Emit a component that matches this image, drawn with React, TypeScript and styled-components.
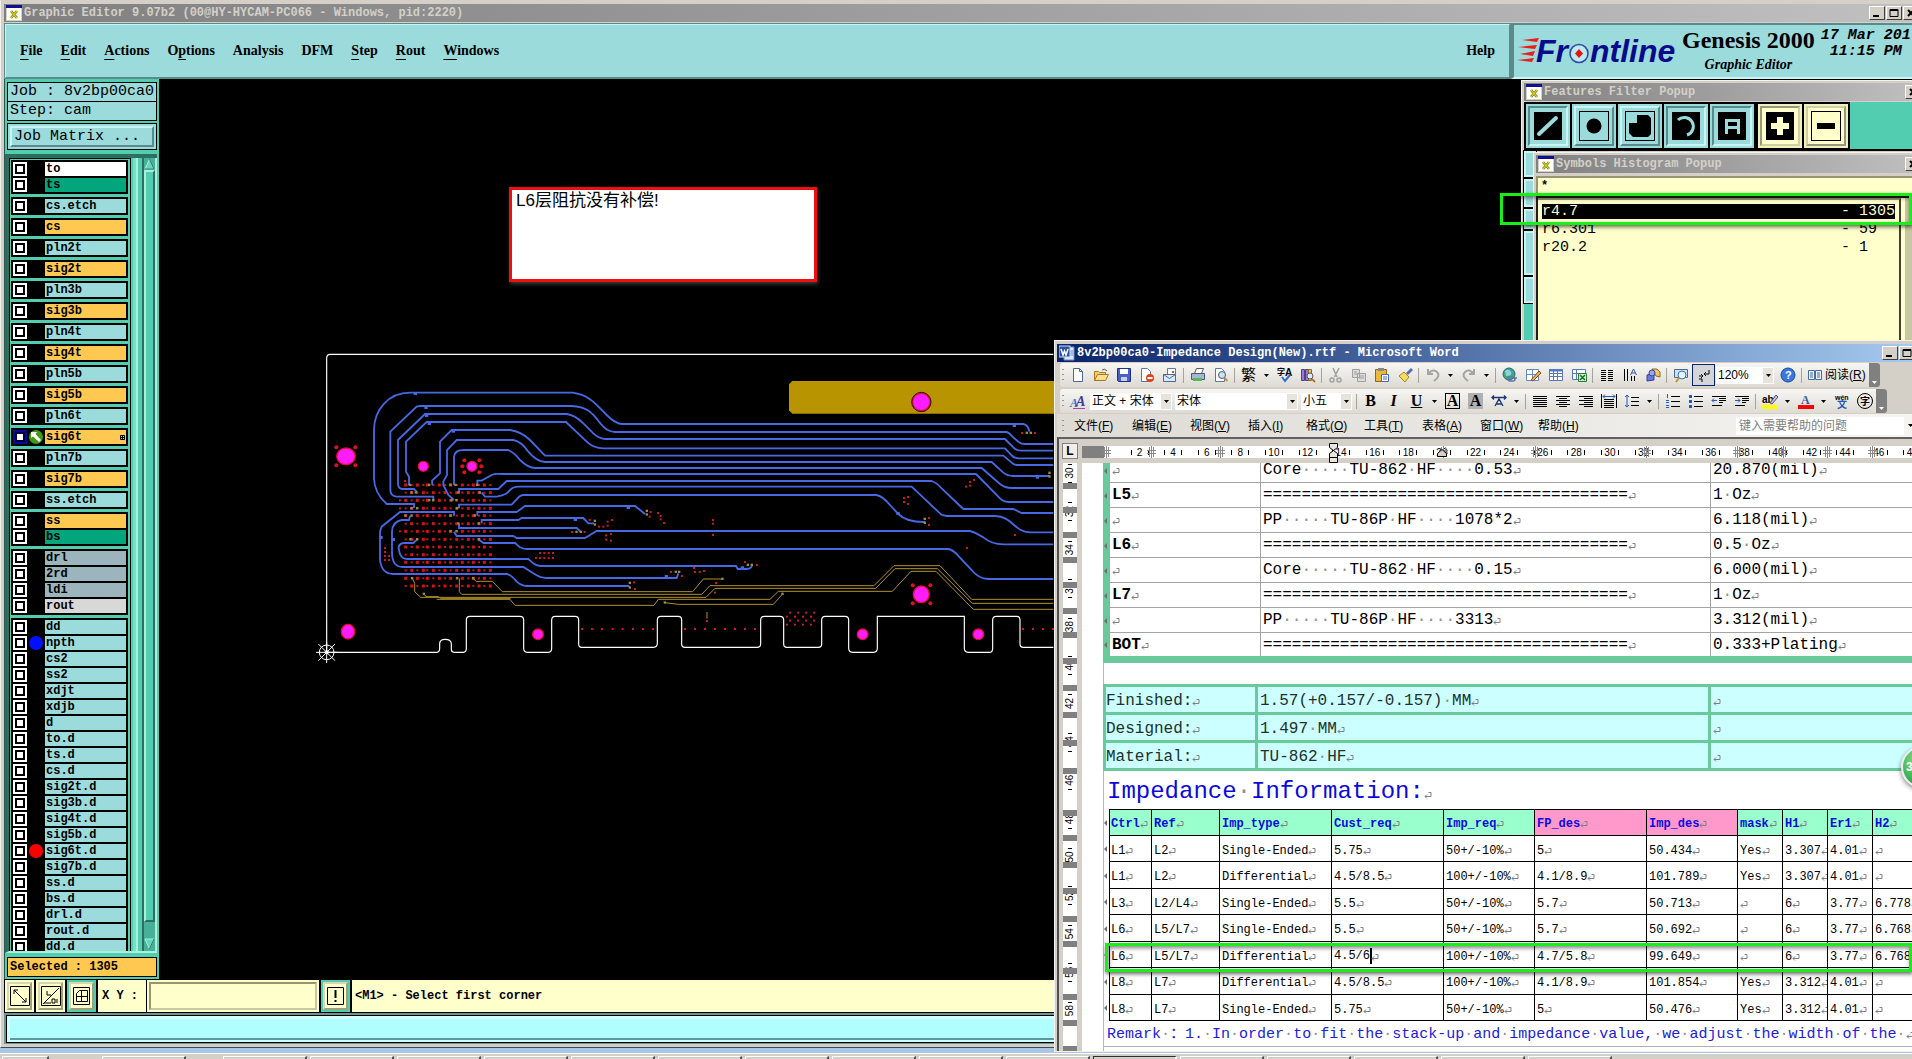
import React from "react";
import styled, { createGlobalStyle, css } from "styled-components";

const MONO = `"Liberation Mono", "Noto Sans CJK SC", monospace`;
const SERIF = `"Liberation Serif", "Noto Sans CJK SC", serif`;
const SANS = `"Liberation Sans", "Noto Sans CJK SC", sans-serif`;

const C = {
  face: "#d4d0c8",
  aqua: "#9cdbdb",
  aquaLight: "#c8f4f4",
  aquaDark: "#5a8a8a",
  teal: "#52cdb0",
  tealLight: "#a8f0dc",
  tealDark: "#2e6e60",
  cream: "#ffffcc",
  orange: "#ffc850",
  green: "#6ac99a",
};

const Global = createGlobalStyle`
  *, *::before, *::after { box-sizing: border-box; }
  html, body { margin: 0; background: #000; overflow: hidden; }
  button, input, select { font: inherit; color: inherit; margin: 0; padding: 0; border: 0; border-radius: 0; }
  button { background: none; white-space: nowrap; }
  svg { display: block; flex: none; }
`;

const raised = (w: number, light: string, dark: string) => css`
  border-style: solid;
  border-width: ${w}px;
  border-color: ${light} ${dark} ${dark} ${light};
`;

/* ---------- shell ---------- */

const Desktop = styled.div`
  position: relative;
  display: flex;
  flex-direction: column;
  height: 100vh;
  overflow: hidden;
  background: #a9c6e6;
  font-family: ${MONO};
  font-size: 12px;
  line-height: 14px;
  color: #000;
`;

const MainWindow = styled.div`
  display: flex;
  flex-direction: column;
  flex: 1;
  min-height: 0;
  margin: 0 -14px 5px 0;
  padding: 3px 4px 0 3px;
  border: 1px solid #f4f2ee;
  border-bottom: 1px solid #404a55;
  border-top-color: ${C.face};
  background: ${C.face};
`;

const TitleBar = styled.div<{ $active?: boolean }>`
  display: flex;
  align-items: center;
  gap: 2px;
  height: 18px;
  flex: none;
  padding: 0 2px;
  color: ${p => (p.$active ? "#fff" : C.face)};
  font-weight: bold;
  white-space: nowrap;
  background: ${p =>
    p.$active
      ? "linear-gradient(90deg, #0a246a, #a6caf0)"
      : "linear-gradient(90deg, #808080, #c0c0c0)"};
`;

const Title = styled.span`
  flex: 1;
`;

const WinButton = styled.button`
  display: grid;
  place-items: center;
  width: 16px;
  height: 14px;
  background: ${C.face};
  ${raised(1, "#fff", "#404040")}
`;

const Buttons = styled.div`
  display: flex;
  gap: 1px;
`;

const AppIcon = () => (
  <svg width="16" height="16" viewBox="0 0 16 16">
    <rect x="0.5" y="0.5" width="15" height="15" fill="#fff" stroke="#d4d0c8" />
    <rect x="0" y="0" width="16" height="3" fill="#10108a" />
    <path d="M5 6L11 13M11 6L5 13" stroke="#8a8a10" strokeWidth="2.6" />
    <path d="M5 6L11 13M11 6L5 13" stroke="#e8e020" strokeWidth="1" />
  </svg>
);

type WinKind = "min" | "max" | "close";
const winPath: Record<WinKind, string> = {
  min: "M1 8h6",
  max: "M1 1.5h8v7h-8zM1 2.5h8",
  close: "M2 2l6 6M8 2l-6 6",
};
const WindowButton = ({ kind }: { kind: WinKind }) => (
  <WinButton aria-label={kind}>
    <svg width="10" height="10" viewBox="0 0 10 10">
      <path d={winPath[kind]} fill="none" stroke="#000" strokeWidth={kind === "max" ? 1 : 2} />
    </svg>
  </WinButton>
);

/* ---------- menu strip ---------- */

const TopStrip = styled.header`
  display: flex;
  flex: none;
  height: 56px;
  margin-top: 1px;
  background: ${C.aqua};
`;

const MenuBar = styled.nav`
  display: flex;
  align-items: center;
  flex: 1;
  gap: 18px;
  padding: 0 14px;
  font: bold 14px/18px ${SERIF};
  ${raised(2, C.aquaLight, C.aquaDark)}
  outline: 1px solid ${C.aquaDark};
  outline-offset: -1px;
`;

const MenuItem = styled.button`
  text-underline-offset: 4px;
  &:last-child { margin-left: auto; }
`;

const Brand = styled.div`
  display: flex;
  flex: none;
  width: 410px;
  gap: 4px;
  padding-left: 2px;
  border-left: 3px solid ${C.aquaDark};
  border-top: 2px solid ${C.aquaDark};
  border-bottom: 2px solid ${C.aquaLight};
  white-space: nowrap;
`;

const BrandLogo = styled.div`
  padding-top: 7px;
`;

const BrandTitle = styled.div`
  text-align: center;
  font: bold 24px/30px ${SERIF};
`;

const BrandSub = styled.div`
  font: italic bold 14px/20px ${SERIF};
`;

const BrandDate = styled.div`
  padding: 3px 0 0 2px;
  text-align: center;
  font: italic bold 15px/16px ${MONO};
`;

const FrontlineLogo = () => (
  <svg width="162" height="40" viewBox="0 -4 162 40">
    <g fill="#ee1c1c">
      <path d="M6 4L23 2L21 6Z" />
      <path d="M2 11L21 9L19 13Z" />
      <path d="M4 18L19 15L17 20Z" />
      <path d="M1 24L18 22L16 26Z" />
    </g>
    <g fill="#0a0a8c" fontFamily="Liberation Sans, sans-serif" fontWeight="bold" fontStyle="italic" fontSize="32">
      <text x="20" y="26">Fr</text>
      <text x="74" y="26">ntline</text>
    </g>
    <circle cx="63" cy="17.500" r="9" fill="#b8ecf0" stroke="#3848a8" strokeWidth="1.600" />
    <path d="M63 13l4 4.500-4 4.500-4-4.500z" fill="#ee1010" />
  </svg>
);

const menus: [string, number][] = [
  ["File", 0], ["Edit", 0], ["Actions", 0], ["Options", 1], ["Analysis", -1],
  ["DFM", -1], ["Step", 0], ["Rout", 0], ["Windows", 0], ["Help", -1],
];

/* ---------- layer sidebar ---------- */

const Body = styled.main`
  display: flex;
  flex: 1;
  min-height: 0;
  background: #000;
`;

const Sidebar = styled.aside`
  display: flex;
  flex-direction: column;
  flex: none;
  width: 155px;
  padding: 3px 2px 3px;
  background: ${C.teal};
  border-left: 1px solid #24584c;
`;

const InfoBox = styled.div<{ $small?: boolean }>`
  height: 20px;
  flex: none;
  margin-bottom: -1px;
  padding: 0 2px;
  border: 1px solid #000;
  background: ${p => (p.$small ? C.orange : C.aqua)};
  font-size: ${p => (p.$small ? 12 : 15)}px;
  font-weight: ${p => (p.$small ? "bold" : "normal")};
  line-height: 18px;
  white-space: nowrap;
`;

const MatrixFrame = styled.div`
  flex: none;
  margin: 3px 0 4px;
  padding: 2px;
  border: 1px solid #000;
  background: ${C.aqua};
`;

const MatrixButton = styled.button`
  display: block;
  width: 100%;
  height: 21px;
  padding-left: 2px;
  text-align: left;
  font-size: 15px;
  line-height: 16px;
  ${raised(2, C.aquaLight, C.aquaDark)}
`;

const ListFrame = styled.div`
  display: flex;
  flex: 1;
  min-height: 0;
  margin: 0 0 4px -2px;
  border-top: 4px solid ${C.tealDark};
  border-left: 4px solid ${C.tealDark};
  border-bottom: 2px solid ${C.tealLight};
`;

const LayerList = styled.div`
  display: flex;
  flex-direction: column;
  gap: 3px;
  width: 122px;
  padding: 1px 2px 0 1px;
  overflow: hidden;
  border: 1px solid #000;
  border-bottom: 0;
`;

const ListEdge = styled.div`
  width: 11px;
  border-left: 2px solid ${C.teal};
  border-right: 4px solid ${C.teal};
  background: linear-gradient(90deg, #78e0c8 3px, ${C.tealLight} 3px);
`;

const LayerGroup = styled.div`
  display: grid;
  flex: none;
  gap: 2px;
  padding: 2px;
  background: #000;
`;

const Layer = styled.label`
  display: grid;
  grid-template-columns: 14px 14px 1fr;
  column-gap: 2px;
  height: 14px;
`;

const LayerCheck = styled.input`
  appearance: none;
  width: 14px;
  height: 14px;
  border: 2px solid #fff;
  background: #fff;
  box-shadow: inset 0 0 0 2px #000;
  &:checked {
    border-color: #0a0a96;
    box-shadow: inset 0 0 0 2px #000040;
  }
`;

const LayerName = styled.span<{ $bg: string }>`
  display: flex;
  justify-content: space-between;
  align-items: center;
  padding: 0 1px;
  background: ${p => p.$bg};
  font-weight: bold;
  line-height: 14px;
`;

const Dot = styled.span<{ $color?: string }>`
  height: 14px;
  border-radius: 50%;
  background: ${p => p.$color || "transparent"};
`;

const ScrollTrack = styled.div`
  display: flex;
  flex-direction: column;
  width: 15px;
  padding-bottom: 1px;
  background: #48b098;
  border-left: 2px solid ${C.tealDark};
  border-right: 2px solid ${C.tealLight};
`;

const ScrollThumb = styled.div`
  flex: 1;
  margin-bottom: 16px;
  background: ${C.teal};
  ${raised(2, C.tealLight, C.tealDark)}
`;

const A = C.aqua, O = C.orange, G = "#02a57c", Y = "#9cb4bc";
const layerGroups: [string, string][][] = [
  [["to", "#ffffff"], ["ts", G]],
  [["cs.etch", A]], [["cs", O]], [["pln2t", A]], [["sig2t", O]], [["pln3b", A]], [["sig3b", O]],
  [["pln4t", A]], [["sig4t", O]], [["pln5b", A]], [["sig5b", O]], [["pln6t", A]], [["sig6t", O]],
  [["pln7b", A]], [["sig7b", O]], [["ss.etch", A]],
  [["ss", O], ["bs", G]],
  [["drl", Y], ["2rd", Y], ["ldi", Y], ["rout", "#d8d8d8"]],
  ["dd", "npth", "cs2", "ss2", "xdjt", "xdjb", "d", "to.d", "ts.d", "cs.d", "sig2t.d", "sig3b.d",
    "sig4t.d", "sig5b.d", "sig6t.d", "sig7b.d", "ss.d", "bs.d", "drl.d", "rout.d", "dd.d",
  ].map(n => [n, A] as [string, string]),
];

const LayerRow = ({ name, bg }: { name: string; bg: string }) => {
  const work = name === "sig6t";
  return (
    <Layer>
      <LayerCheck type="checkbox" defaultChecked={work} />
      {work ? (
        <svg width="14" height="14" viewBox="0 0 14 14">
          <circle cx="7" cy="7" r="7" fill="#3f9a14" />
          <path d="M2 2h6L6.500 4 12 10l-2 2L4 6.500 2 8z" fill="#fff" />
        </svg>
      ) : (
        <Dot $color={name === "npth" ? "#0010ff" : name === "sig6t.d" ? "#ff0000" : undefined} />
      )}
      <LayerName $bg={bg}>
        {name}
        {work && (
          <svg width="5" height="5" viewBox="0 0 5 5">
            <path d="M.5.5h4v4h-4zM2.500 0v5M0 2.500h5" fill="none" stroke="#000" />
          </svg>
        )}
      </LayerName>
    </Layer>
  );
};

const ScrollArrow = ({ down }: { down?: boolean }) => (
  <svg width="11" height="12" viewBox="0 0 11 12">
    <path d={down ? "M1 1h9L5.500 11z" : "M1 11h9L5.500 1z"} fill="#62d8bc" stroke={C.tealLight} />
    <path d={down ? "M10 1L5.500 11" : "M1 11h9L5.500 1"} fill="none" stroke={C.tealDark} />
  </svg>
);

/* ---------- board drawing ---------- */

const Canvas = styled.div`
  flex: 1;
  min-width: 0;
  overflow: hidden;
  background: #000;
`;

const traces = [
  "M312 504V492H230C205 470 192 440 192 415V270C192 210 235 158 300 158H788C840 165 860 195 890 225Q915 250 935 252H2140Q2155 255 2158 275",
  "M370 480V470H260Q241 468 241 450V275L320 200 330 198H785C845 200 855 235 880 260Q895 275 915 276H2090Q2098 278 2105 288L2125 305Q2135 312 2145 312H2230",
  "M322 458L312 447H275Q264 445 264 430V300L345 222H770Q795 225 820 250L850 280Q865 295 885 297H2085L2110 322Q2118 332 2135 332H2230",
  "M297 435V410L288 395V305L350 246H768L830 305Q850 325 880 325H2085L2105 346Q2112 356 2130 355H2230",
  "M367 435L366 422 390 400V305L425 270H600Q635 275 660 300L705 347H2080L2105 368Q2112 375 2120 375H2230",
  "M432 480L415 465 400 435V425L411 405V330L440 300H610Q635 305 655 335 680 365 705 366H2045L2080 398Q2092 408 2110 408H2220",
  "M432 435V350Q435 330 460 330H595Q615 340 630 360 655 384 675 384H2015L2070 432Q2085 444 2105 444H2230",
  "M502 435V422H515L545 405Q555 400 575 402H1998L2070 475Q2080 486 2100 486H2230",
  "M447 460V447H565L590 423H1865Q1880 428 1895 445L1960 507H2110L2135 519H2230",
  "M515 458L525 470H560Q590 465 600 450 610 440 625 440H1805L1895 525 1910 528H2055C2110 530 2110 575 2160 577H2230",
  "M447 505V494H605L620 478Q630 465 640 465H1700Q1720 470 1740 495L1765 522Q1790 547 1845 546",
  "M502 527V516H620L645 498H975L1005 522",
  "M515 550V540H625L635 534H820L835 550H852",
  "M447 552V564H800L812 575",
  "M432 575L440 588H610L620 594H825L860 573H1980Q2000 578 2020 592 2045 613 2080 613H2230",
  "M505 598L520 609H615L630 622Q638 627 650 627H1915Q1930 630 1945 648L1985 690Q2005 716 2035 717H2230",
  "M322 598L310 609H280Q265 612 266 625 270 657 290 657H655L670 670Q680 678 690 678H1278L1283 687H1310Q1325 685 1325 678",
  "M300 528L297 540H275Q247 545 246 575V640Q247 682 280 681H640L670 700Q690 714 710 714H1100L1105 700",
  "M432 527V516H270L215 560Q210 570 210 580V660Q215 702 250 702H590Q605 705 620 725 635 738 650 738H958",
];

const goldTraces = [
  "M490 715L498 724H547L577 755H1148L1180 717H1238",
  "M448 715V755L455 763H1175L1200 737H1692L1752 677H1890L1985 778H2230",
  "M307 715L314 730V755L332 772H1188L1215 745H1697L1755 686H1882L1987 790H2230",
  "M342 762L348 770H385L392 775H602M380 778H600L615 796H1032L1045 778H1380L1405 754H1747L1803 694H1878L1990 808H2230",
  "M1065 788L1105 793H1390L1418 762",
  "M1191 816V836",
];

const outline =
  "M2230 43H60Q50 43 50 55V937H380Q389 937 389 925V910Q390 898 405 898 424 898 424 912V928Q424 937 432 937H460Q469 937 469 925V840Q469 829 480 829H630Q641 829 641 840V925Q641 937 652 937H715Q725 937 725 925V840Q725 829 736 829H795Q806 829 806 840V912Q806 922 815 922H1030Q1042 922 1042 910V840Q1042 829 1053 829H1105Q1115 829 1115 840V912Q1115 922 1125 922H1340Q1352 922 1352 912V840Q1352 829 1363 829H1410Q1421 829 1421 840V912Q1421 922 1431 922H1525Q1535 922 1535 912V840Q1535 829 1546 829H1605Q1616 829 1616 840V925Q1616 937 1628 937H1690Q1702 937 1702 925V829H1963V925Q1963 937 1975 937H2040Q2048 937 2048 925V840Q2048 829 2059 829H2120Q2130 829 2130 840V912Q2130 922 2140 922H2230";

const pads: [number, number, number, number][] = [
  [108, 349, 28, 25], [340, 379, 15, 15], [486, 379, 15, 15], [114, 875, 20, 22], [684, 883, 16, 16],
  [1834, 186, 26, 26], [1834, 763, 24, 25], [1658, 883, 16, 16], [2005, 883, 16, 16],
];

const gridRows = [435, 458, 481, 505, 527, 551, 574, 598, 621, 644, 667, 691, 715, 738];
const gridCols = [287, 305, 322, 340, 352, 370, 388, 405, 422, 440, 457, 475, 490, 507, 523, 541];

const specks: [number, number][] = [
  [285, 423], [270, 481], [270, 505], [270, 574], [225, 624], [225, 636], [225, 648], [225, 660],
  [237, 648], [237, 660], [690, 639], [703, 639], [716, 639], [729, 639], [678, 654], [690, 654], [703, 654],
  [716, 654], [729, 654], [839, 540], [867, 560], [880, 560], [893, 545], [906, 540], [893, 557], [786, 576],
  [824, 576], [888, 586], [903, 582], [888, 599], [903, 602], [1022, 516], [1044, 519], [1052, 528], [1052, 538],
  [1062, 549], [1019, 530], [1083, 696], [1116, 708], [972, 727], [975, 747], [1209, 540], [1209, 551],
  [1209, 585], [1305, 666], [1341, 675], [1152, 684], [1155, 696], [1169, 696], [1182, 693], [1218, 729],
  [1215, 758], [1782, 474], [1794, 471], [1782, 486], [1794, 492], [1857, 534], [1857, 555], [1968, 440],
  [1980, 426], [1980, 437], [1992, 420], [2136, 279], [2175, 279], [2115, 585], [1971, 624], [1191, 843],
];
const satellites: [number, number][] = [
  [79, 322], [136, 322], [79, 376], [136, 376], [463, 361], [508, 361], [457, 379], [514, 379], [463, 397],
  [508, 397], [1808, 736], [1861, 736], [1808, 790], [1861, 790],
];
const pins = [816, 846, 876, 908, 938, 969, 999, 1029, 1125, 1155, 1185, 1215, 1245, 1275, 1305, 1335, 2139, 2169, 2199, 2229];
const cluster = [0, 1, 2, 3].flatMap(r => [0, 1, 2, 3].map(c => [1440 + c * 24 + (r % 2) * -9, 818 + r * 12] as [number, number]));
const olive: [number, number][] = [
  [300, 435], [358, 435], [422, 435], [437, 435], [502, 435], [305, 458], [318, 458], [446, 458], [510, 458],
  [358, 481], [370, 481], [425, 481], [440, 481], [305, 505], [322, 505], [442, 505], [287, 527], [305, 527],
  [422, 527], [495, 527], [507, 551], [446, 551], [422, 574], [440, 574], [302, 598], [322, 598], [507, 598],
  [307, 715], [442, 715], [490, 715], [1011, 513], [1011, 524], [855, 543], [855, 554], [800, 576], [813, 576],
  [960, 729], [960, 743], [1098, 696], [1108, 696], [1314, 675], [1326, 675], [1845, 537], [1845, 549],
  [2151, 279], [2163, 279], [2219, 399], [2219, 410], [342, 762], [1065, 788], [1418, 762], [1238, 717],
];
const tees: [number, number][] = [
  [316, 160], [348, 202], [350, 226], [358, 250], [430, 273], [213, 592], [250, 598], [955, 502],
  [796, 538], [1069, 709], [1764, 520], [2113, 256], [2182, 411], [1297, 683],
];

const Board = () => (
  <svg width="1100" height="640" viewBox="0 0 1100 640">
    <g transform="translate(151 261) scale(0.33333)" fill="none">
      <path d="M1447 123H2260V221H1447L1437 211V133Z" fill="#b89400" />
      <path d={outline} stroke="#fff" strokeWidth="3.500" />
      {gridRows.map((y, r) =>
        gridCols.map((x, c) => {
          const s = (r + c) % 2 ? 6 : 9;
          return <rect key={`${r}-${c}`} x={x - s / 2} y={y - s / 2} width={s} height={s} fill="#d41414" />;
        })
      )}
      {traces.map(d => <path key={d} d={d} stroke="#4868e4" strokeWidth="5.500" />)}
      {goldTraces.map(d => <path key={d} d={d} stroke="#b0922c" strokeWidth="3" />)}
      {[...specks, ...cluster].map(([x, y]) => (
        <rect key={`${x}-${y}`} x={x - 3} y={y - 3} width="6" height="6" fill="#c81c1c" />
      ))}
      {satellites.map(([x, y]) => <circle key={`${x}-${y}`} cx={x} cy={y} r="6" fill="#e01020" />)}
      {pins.map(x => <rect key={x} x={x - 3} y="864" width="6" height="6" fill="#c81c1c" />)}
      {olive.map(([x, y]) => (
        <rect key={`${x}-${y}`} x={x - 4} y={y - 4} width="7" height="7" fill="#9c8c3c" />
      ))}
      {tees.map(([x, y]) => (
        <rect key={`${x}-${y}`} x={x - 5} y={y - 4} width="10" height="9" fill="#4868e4" />
      ))}
      {pads.map(([x, y, rx, ry]) => (
        <ellipse key={`${x}-${y}`} cx={x} cy={y} rx={rx} ry={ry} fill="#ff1cff" stroke="#e01030" strokeWidth="4" />
      ))}
      <circle cx="1834" cy="186" r="29" stroke="#300" strokeWidth="3" />
      <g stroke="#fff" strokeWidth="3">
        <circle cx="50" cy="937" r="22" />
        <circle cx="50" cy="937" r="5" />
        <path d="M18 937H82M50 905V969M25 912L75 962M75 912L25 962" />
      </g>
    </g>
  </svg>
);

const Note = styled.div`
  position: absolute;
  left: 509px;
  top: 187px;
  width: 308px;
  height: 95px;
  padding: 1px 4px;
  border: 3px solid #ee1010;
  background: #fff;
  box-shadow: 1px 2px 4px rgba(255, 255, 255, 0.25);
  font: 17px/20px ${SANS};
`;

/* ---------- status rows ---------- */

const StatusRow = styled.div`
  display: flex;
  flex: none;
  height: 34px;
  padding: 1px 0 1px 1px;
  gap: 2px;
  background: #000;
  font-weight: bold;
`;

const ToolCell = styled.div<{ $on?: boolean }>`
  display: grid;
  place-items: center;
  flex: none;
  width: 29px;
  background: ${p => (p.$on ? C.teal : C.cream)};
`;

const ToolButton = styled.button`
  display: grid;
  place-items: center;
  width: 25px;
  height: 28px;
  background: ${C.cream};
  ${raised(2, "#d8d8ac", "#a0a078")}
`;

const CoordField = styled.div`
  display: flex;
  flex: none;
  width: 221px;
  background: ${C.cream};
`;

const CoordLabel = styled.label`
  display: flex;
  align-items: center;
  width: 49px;
  padding-left: 4px;
  border-right: 1px solid #000;
`;

const CoordInput = styled.input`
  flex: 1;
  min-width: 0;
  margin: 2px;
  background: ${C.cream};
  border: 2px solid;
  border-color: #98966e #c8c8a0 #c8c8a0 #98966e;
  outline: 0;
`;

const Message = styled.div`
  display: flex;
  align-items: center;
  flex: 1;
  padding-left: 3px;
  background: ${C.cream};
`;

const Footer = styled.div`
  flex: none;
  height: 31px;
  margin-bottom: 3px;
  padding: 2px;
  background: #6a9696;
`;

const FooterInner = styled.div`
  height: 28px;
  border: 1px solid #000;
  background: #b0fffe;
  box-shadow: inset 0 -2px #d0ffff, inset 3px 3px #d4ffff, inset 0 -4px #5f9898;
`;

const Taskbar = styled.div`
  display: flex;
  flex: none;
  gap: 3px;
  height: 6px;
  padding: 2px 0 0 2px;
  overflow: hidden;
  background: ${C.face};
  border-top: 1px solid #fff;
`;

const TaskButton = styled.button<{ $w?: number; $gap?: number; $on?: boolean }>`
  flex: none;
  width: ${p => p.$w || 84}px;
  height: 20px;
  margin-left: ${p => p.$gap || 0}px;
  background: ${C.face};
  border: 1px solid;
  border-width: 1px 2px 1px 1px;
  border-color: ${p => (p.$on ? "#303030 #fff #fff #303030" : "#fff #505050 #505050 #fff")};
`;

/* ---------- popups ---------- */

const Popup = styled.section<{ $left: number; $top: number }>`
  position: absolute;
  left: ${p => p.$left}px;
  top: ${p => p.$top}px;
  right: -14px;
  bottom: 50px;
  padding: 2px;
  border: 1px solid #f4f2ee;
  background: ${C.face};
  overflow: hidden;
`;

const FilterBar = styled.div`
  display: flex;
  gap: 2px;
  height: 49px;
  margin-top: 1px;
  padding: 2px 0 2px 2px;
  background: linear-gradient(90deg, #000 326px, ${C.teal} 326px);
  border-bottom: 2px solid #000;
`;

const FilterButton = styled.button<{ $on?: boolean; $cream?: boolean }>`
  display: grid;
  place-items: center;
  flex: none;
  width: 44px;
  height: 44px;
  background: ${p => (p.$cream ? C.cream : C.aqua)};
  ${p => {
    const light = p.$cream ? "#d0d0a0" : C.aquaLight;
    const dark = p.$cream ? "#98987a" : C.aquaDark;
    return p.$on ? raised(4, dark, light) : raised(4, light, dark);
  }}
  outline: 2px solid ${p => (p.$cream ? "#f0f0c0" : C.aqua)};
  outline-offset: -2px;
`;

const PolarityGroup = styled.div`
  display: flex;
  gap: 2px;
  padding-left: 2px;
`;

const SideStubs = styled.div`
  display: flex;
  flex-direction: column;
  gap: 2px;
  width: 12px;
  height: 100%;
  background: ${C.teal};
`;

const Stub = styled.div<{ $h: number }>`
  height: ${p => p.$h}px;
  background: ${C.aqua};
  border: 2px solid ${C.aquaLight};
  outline: 1px solid #000;
`;

const FilterInput = styled.input`
  display: block;
  width: 100%;
  height: 17px;
  margin-top: 3px;
  padding-left: 3px;
  background: ${C.cream};
  border-top: 2px solid #98966e;
  border-left: 2px solid #98966e;
  font-weight: bold;
`;

const HistogramBody = styled.div`
  display: flex;
  margin-top: 3px;
  height: 200px;
  background: ${C.cream};
  border: 2px solid #202018;
`;

const HistogramList = styled.ul`
  flex: 1;
  margin: 0;
  padding: 4px 4px 0;
  list-style: none;
  border-top: 2px solid #98966e;
  border-right: 2px solid #404038;
  font-size: 15px;
`;

const HistogramItem = styled.li<{ $on?: boolean }>`
  display: grid;
  grid-template-columns: 1fr 18px 36px;
  height: 15px;
  margin-bottom: 3px;
  line-height: 15px;
  background: ${p => (p.$on ? "#000" : "transparent")};
  color: ${p => (p.$on ? C.cream : "#000")};
`;

const HistogramScroll = styled.div`
  width: 20px;
  border-left: 4px solid ${C.cream};
  background: #c8c8a4;
`;

const GlyphIcon = ({ on, cream, children }: { on?: boolean; cream?: boolean; children: React.ReactNode }) => {
  const bg = cream ? C.cream : C.aqua;
  return (
    <svg width="30" height="30" viewBox="0 0 30 30" color={on ? bg : "#000"} fill="none">
      <rect x="0.500" y="0.500" width="29" height="29" fill={on ? "#000" : bg} stroke={on ? bg : "#000"} />
      {children}
    </svg>
  );
};

/* ---------- word window ---------- */

const WordWindow = styled.section`
  position: absolute;
  left: 1054px;
  top: 340px;
  right: -6px;
  bottom: 7px;
  display: flex;
  flex-direction: column;
  padding: 3px 0 0 2px;
  border: 1px solid #f4f2ee;
  background: ${C.face};
  font-family: ${SANS};
`;

const WordTitle = styled(TitleBar)`
  font-family: ${MONO};
`;

const Toolbar = styled.div`
  display: flex;
  align-items: center;
  flex: none;
  width: max-content;
  height: 24px;
  margin: 1px 0 1px 3px;
  border-radius: 3px;
  background: linear-gradient(#f7f6f3, #dedbd4);
  overflow: hidden;
`;

const Handle = styled.span`
  width: 6px;
  height: 16px;
  background: radial-gradient(circle, #98948c 1px, transparent 1px) 0 0 / 6px 5px;
`;

const Tool = styled.button<{ $on?: boolean }>`
  display: grid;
  place-items: center;
  width: 23px;
  height: 22px;
  font: bold 16px/18px ${SERIF};
  ${p => p.$on && css`
    border: 1px solid #0a246a;
    background: #d4d5d8;
  `}
`;

const CjkTool = styled(Tool)`
  font: 15px/18px ${SANS};
`;

const Sep = styled.span`
  width: 1px;
  height: 15px;
  margin: 0 2px;
  background: #a5a29a;
`;

const DropArrow = styled.button`
  display: grid;
  place-items: center;
  width: 13px;
  height: 20px;
`;

const Combo = styled.div<{ $w: number }>`
  display: flex;
  width: ${p => p.$w}px;
  height: 17px;
  margin: 0 2px 0 1px;
  background: #fff;
`;

const ComboSelect = styled.select`
  appearance: none;
  flex: 1;
  min-width: 0;
  padding-left: 2px;
  background: #fff;
  border: 0;
  font: 12px/16px ${SANS};
`;

const ComboArrow = styled.span`
  display: grid;
  place-items: center;
  width: 12px;
  background: #e6e3dd;
  border: 1px solid #fff;
`;

const EndCap = styled.button`
  display: flex;
  align-items: flex-end;
  justify-content: center;
  width: 11px;
  height: 24px;
  padding-bottom: 3px;
  background: #808080;
`;

const ReadButton = styled.button`
  display: flex;
  align-items: center;
  gap: 2px;
  padding: 0 3px;
  font: 12px/16px ${SANS};
`;

const WordMenu = styled.nav`
  display: flex;
  align-items: center;
  flex: none;
  height: 23px;
  padding-left: 3px;
  background: linear-gradient(90deg, #dedbd5, #f5f4f1);
`;

const WordMenuItem = styled.button`
  width: 58px;
  padding-left: 8px;
  text-align: left;
  font: 12px/16px ${SANS};
`;

const AskBox = styled.input`
  width: 168px;
  height: 18px;
  margin-left: auto;
  padding-left: 3px;
  background: #fff;
  font: 12px/16px ${SANS};
  &::placeholder { color: #808080; opacity: 1; }
`;

const WorkArea = styled.div`
  display: grid;
  grid-template-columns: 23px 1fr;
  grid-template-rows: 24px 1fr;
  flex: 1;
  min-height: 0;
  border-top: 2px solid #606060;
  border-left: 2px solid #505050;
`;

const TabStop = styled.button`
  width: 16px;
  height: 16px;
  margin: 4px 0 0 3px;
  border: 1px solid #808080;
  background: #f0eeea;
  font: bold 12px/12px ${SANS};
`;

const RulerX = styled.div`
  padding-top: 3px;
  overflow: hidden;
`;

const RulerY = styled.div`
  padding-left: 4px;
  overflow: hidden;
`;

const Page = styled.article`
  overflow: hidden;
  padding-left: 21px;
  background: linear-gradient(#b8b8b8, #b8b8b8) 21px 0 / 1px 100% no-repeat #fff;
  font: 16px/20px ${MONO};
`;

const DocTable = styled.table`
  width: 100%;
  table-layout: fixed;
  border-spacing: 0;
  white-space: nowrap;
  td, th { padding: 0 0 0 2px; overflow: hidden; text-align: left; }
`;

const StackTable = styled(DocTable)`
  margin: -5px 0 21px;
  border-bottom: 7px solid ${C.green};
  td, th {
    height: 25px;
    border-bottom: 1px solid #a4a4a4;
    border-right: 1px solid #a4a4a4;
  }
  tr > :first-child { padding: 0; background: ${C.green}; border: 0; }
  tr:last-child > * { height: 23px; border-bottom: 0; }
`;

const SummaryTable = styled(DocTable)`
  border-top: 3px solid ${C.green};
  td, th {
    height: 28px;
    padding-top: 2px;
    background: #ccffff;
    border-right: 3px solid ${C.green};
    border-bottom: 3px solid ${C.green};
    font-weight: normal;
    color: #20302c;
  }
  tr > :first-child { padding-left: 0; border-left: 3px solid ${C.green}; }
`;

const Heading = styled.h2`
  margin: 0;
  height: 38px;
  padding-left: 4px;
  color: #0a0ae0;
  font: 24px/42px ${MONO};
  white-space: nowrap;
`;

const ImpTable = styled(DocTable)`
  font-size: 12px;
  line-height: 16px;
  td, th {
    height: 26px;
    padding-top: 4px;
    border-right: 1px solid #000;
    border-bottom: 1px solid #000;
  }
  th { padding-top: 2px; }
  tr:nth-child(odd) > * { height: 27px; }
  tr > :first-child { padding: 0; border: 0; }
  tr > :nth-child(2) { padding-left: 1px; border-left: 1px solid #000; }
`;

const Th = styled.th<{ $pink?: boolean }>`
  border-top: 1px solid #000;
  background: ${p => (p.$pink ? "#ff99cc" : "#99ffcc")};
  color: #0a0ae0;
`;

const Remark = styled.p`
  margin: 0;
  height: 26px;
  padding: 2px 0 0 4px;
  border-bottom: 1px solid #b0b0b0;
  color: #2020d8;
  font-size: 15px;
  line-height: 24px;
  white-space: nowrap;
`;

const MarkSvg = styled.svg`
  display: inline-block;
  vertical-align: -2px;
`;

const SpaceDot = styled.span`
  color: #909090;
`;

const Caret = styled.span`
  display: inline-block;
  width: 2px;
  height: 16px;
  margin-right: -1px;
  vertical-align: middle;
  background: #000;
`;

const Mark = () => (
  <MarkSvg width="8" height="9" viewBox="0 0 8 9">
    <path d="M4.500 1.500H7V5.500H1M3 3.500L1 5.500 3 7.500" fill="none" stroke="#808080" />
  </MarkSvg>
);

const RowMark = () => (
  <svg width="5" height="6" viewBox="0 0 5 6">
    <path d="M4 0v6L1 3z" fill="#707070" />
  </svg>
);

/* Renders formatted text: middle dots stand for visible spaces. */
const Doc = ({ t, caret }: { t: string; caret?: boolean }) => (
  <>
    {t.split(/(·+)/).map((s, i) => (s.startsWith("·") ? <SpaceDot key={i}>{s}</SpaceDot> : s))}
    {caret && <Caret />}
    <Mark />
  </>
);

const EQ = "=".repeat(38);
const stack: [string, string, string][] = [
  ["", "Core·····TU-862·HF····0.53", "20.870(mil)"],
  ["L5", EQ, "1·Oz"],
  ["", "PP·····TU-86P·HF····1078*2", "6.118(mil)"],
  ["L6", EQ, "0.5·Oz"],
  ["", "Core·····TU-862·HF····0.15", "6.000(mil)"],
  ["L7", EQ, "1·Oz"],
  ["", "PP·····TU-86P·HF····3313", "3.312(mil)"],
  ["BOT", EQ, "0.333+Plating"],
];
const summary = [["Finished:", "1.57(+0.157/-0.157)·MM"], ["Designed:", "1.497·MM"], ["Material:", "TU-862·HF"]];
const impHead = ["Ctrl", "Ref", "Imp_type", "Cust_req", "Imp_req", "FP_des", "Imp_des", "mask", "H1", "Er1", "H2"];
const impCols = [6, 43, 68, 112, 112, 91, 112, 91, 45, 45, 45];
const S = "Single-Ended", D = "Differential";
const impRows = [
  ["L1", "L2", S, "5.75", "50+/-10%", "5", "50.434", "Yes", "3.307", "4.01", ""],
  ["L1", "L2", D, "4.5/8.5", "100+/-10%", "4.1/8.9", "101.789", "Yes", "3.307", "4.01", ""],
  ["L3", "L2/L4", S, "5.5", "50+/-10%", "5.7", "50.713", "", "6", "3.77", "6.778"],
  ["L6", "L5/L7", S, "5.5", "50+/-10%", "5.7", "50.692", "", "6", "3.77", "6.768"],
  ["L6", "L5/L7", D, "4.5/6", "100+/-10%", "4.7/5.8", "99.649", "", "6", "3.77", "6.768"],
  ["L8", "L7", D, "4.5/8.5", "100+/-10%", "4.1/8.9", "101.854", "Yes", "3.312", "4.01", ""],
  ["L8", "L7", S, "5.75", "50+/-10%", "5", "50.476", "Yes", "3.312", "4.01", ""],
];

const wordMenus = [["文件", "F"], ["编辑", "E"], ["视图", "V"], ["插入", "I"], ["格式", "O"], ["工具", "T"], ["表格", "A"], ["窗口", "W"], ["帮助", "H"]];

const Tri = ({ color = "#000" }: { color?: string }) => (
  <svg width="5" height="3" viewBox="0 0 5 3"><path d="M0 0h5L2.500 3z" fill={color} /></svg>
);

const drawings: Record<string, React.ReactNode> = {
  new: <path d="M3.500 1.500h6l3 3v10h-9zM9.500 1.500v3h3" fill="#fff" stroke="#4a6a9a" />,
  open: <><path d="M1.500 13.500v-9h4l1 1h6v3" fill="#f4d070" stroke="#a87820" /><path d="M1.500 13.500l3-6h11l-3 6z" fill="#ffe090" stroke="#a87820" /><path d="M9 3q3-2 5 1" fill="none" stroke="#555" /></>,
  save: <><path d="M1.500 1.500h13v13h-12l-1-1z" fill="#4a5ec8" stroke="#20308a" /><path d="M4 2h8v5H4z" fill="#fff" /><path d="M5 10h6v4H5z" fill="#c8d0e8" /></>,
  perm: <><path d="M2.500 1.500h6l3 3v10h-9z" fill="#fff" stroke="#5a78a8" /><circle cx="11" cy="11" r="4" fill="#e04418" /><path d="M8.500 11h5" stroke="#fff" strokeWidth="2" /></>,
  mail: <><path d="M5.500 1.500h8v8h-8z" fill="#fff" stroke="#5a78a8" /><path d="M1.500 7.500h12v7h-12z" fill="#dce8f8" stroke="#4a6a9a" /><path d="M1.500 7.500l6 4 6-4" fill="none" stroke="#4a6a9a" /><path d="M10 4h2v2h-2z" fill="#e05020" /></>,
  print: <><path d="M4.500 6.500l2-5h7l-2 5" fill="#fff" stroke="#556" /><path d="M1.500 6.500h13v6h-13z" fill="#a8b8cc" stroke="#445a78" /><path d="M3 11h9v3H3z" fill="#58b858" /></>,
  preview: <><path d="M2.500 1.500h6l3 3v10h-9z" fill="#fff" stroke="#5a78a8" /><circle cx="9" cy="8" r="3.500" fill="#c8e4f8" stroke="#556" /><path d="M11.500 11l3 3" stroke="#c89030" strokeWidth="2" /></>,
  spell: <><text x="0" y="8" fontSize="8" fill="#000">字</text><text x="8" y="9" fontSize="10" fill="#000">A</text><path d="M5 10l3 4 5-6" fill="none" stroke="#2f6ad8" strokeWidth="2" /></>,
  research: <><path d="M1.500 2.500h3v11h-3zM5.500 2.500h3v11h-3z" fill="#9a78d0" stroke="#50408a" /><path d="M8.500 2.500h3v11h-3z" fill="#f0c860" stroke="#8a6820" /><circle cx="10" cy="9" r="3" fill="#d8ecfa" stroke="#556" /><path d="M12 12l3 3" stroke="#b07820" strokeWidth="2" /></>,
  cut: <path d="M5 1l4 9M11 1L6.500 10M4 11a2 2 0 1 0 2 2 2 2 0 0 0-2-2zM11 11a2 2 0 1 0 2 2 2 2 0 0 0-2-2z" fill="none" stroke="#a0a0a0" strokeWidth="1.500" />,
  copy: <path d="M1.500 2.500h7v8h-7zM6.500 6.500h8v8h-8zM8 9h5M8 11h5M3 5h3M3 7h3" fill="#dcdcdc" stroke="#a0a0a0" />,
  paste: <><path d="M1.500 2.500h11v12h-11z" fill="#e8b840" stroke="#8a6820" /><path d="M4 1h6v3H4z" fill="#888" /><path d="M7.500 7.500h7v7h-7z" fill="#fff" stroke="#4a6ab8" /><path d="M9 10h4M9 12h4" stroke="#4a6ab8" /></>,
  brush: <><path d="M9 6l5-5 2 2-5 5z" fill="#5a68b8" /><path d="M2 9l5-4 5 5-4 5z" fill="#f4dc60" stroke="#a08828" /></>,
  undo: <path d="M3 2v5h5M3 7q5-6 9-2t-3 9" fill="none" stroke="#a4a4a4" strokeWidth="2" />,
  redo: <path d="M13 2v5H8M13 7Q8 1 4 5t3 9" fill="none" stroke="#a4a4a4" strokeWidth="2" />,
  link: <><circle cx="7" cy="7" r="6" fill="#48a868" stroke="#2860a8" /><path d="M3 4q4-3 6 1t-5 4z" fill="#8ad0f0" /><path d="M6 12q0-2 2-2h3q2 0 2 2t-2 2H8q-2 0-2-2zM11 11h4" fill="none" stroke="#5878a8" strokeWidth="1.500" /></>,
  tdraw: <><path d="M1.500 2.500h12v11h-12zM1.500 7.500h12M7.500 2.500v11" fill="#fff" stroke="#6888c0" /><path d="M6 13l8-9 2 2-8 8z" fill="#f0b050" stroke="#885018" /></>,
  table: <><path d="M1.500 2.500h13v11h-13zM1.500 6.500h13M1.500 9.500h13M5.500 2.500v11M9.500 2.500v11" fill="#fff" stroke="#5878b8" /><path d="M1 2h14v2.500H1z" fill="#5878c8" /></>,
  excel: <><path d="M1.500 2.500h13v10h-13zM1.500 6.500h13M5.500 2.500v10" fill="#fff" stroke="#5878b8" /><path d="M7.500 6.500h8v8h-8z" fill="#d8f0d8" stroke="#288038" /><path d="M9 8l5 5M14 8l-5 5" stroke="#187028" strokeWidth="1.500" /></>,
  cols: <path d="M2 3.500h5M2 5.500h5M2 7.500h5M2 9.500h5M2 11.500h5M2 13.500h5M9 3.500h5M9 5.500h5M9 7.500h5M9 9.500h5M9 11.500h5M9 13.500h5" stroke="#000" />,
  tdir: <><path d="M2.500 2v12M5.500 2v12M9.500 9v5M12.500 9v5" stroke="#000" /><path d="M8.500 8l3-6 3 6M9.500 6h4" fill="none" stroke="#3858a8" /></>,
  shapes: <><path d="M2 8l7-2v7l-7 1z" fill="#6a78d8" stroke="#38409a" /><path d="M7 2h5l3 3v5l-4-1z" fill="#f0c860" stroke="#8a6820" /><circle cx="7" cy="6" r="3" fill="#98a8f0" stroke="#38409a" /></>,
  docmap: <><path d="M1.500 2.500h13v8h-13z" fill="#cfe0f4" stroke="#4a6a9a" /><circle cx="9" cy="8" r="4" fill="#e4f4ff" stroke="#3878a8" /><path d="M6 11l-3 4" stroke="#c89030" strokeWidth="2" /></>,
  marks: <path d="M13 3v4H8M10 5L8 7l2 2M3 9h4M5 7l2 2-2 2M3 12h3v3" fill="none" stroke="#000" />,
  help: <><circle cx="8" cy="8" r="7" fill="#3a78e0" stroke="#1848a0" /><text x="5" y="12" fontSize="11" fontWeight="bold" fill="#fff">?</text></>,
  read: <path d="M1.500 3.500h6v9h-6zM8.500 3.500h6v9h-6zM3 6h3M3 8h3M3 10h3M10 6h3M10 8h3M10 10h3" fill="#eaf2fa" stroke="#4a6a9a" />,
  styles: <g fontFamily="Liberation Serif, serif" fontStyle="italic" fontWeight="bold"><text x="0" y="14" fontSize="12" fill="#3a70c8">A</text><text x="6" y="13" fontSize="14" fill="#4038a0">A</text><path d="M3 15.500h12" stroke="#a048b0" /></g>,
  scale: <path d="M4 13l4-7 4 7M5 11h6M1 4.500h14M3 2.500L1 4.500l2 2M13 2.500l2 2-2 2" fill="none" stroke="#203878" strokeWidth="1.400" />,
  just: <path d="M1 3.500h14M1 5.500h14M1 7.500h14M1 9.500h14M1 11.500h14M1 13.500h14" stroke="#000" />,
  center: <path d="M1 3.500h14M4 5.500h8M1 7.500h14M4 9.500h8M1 11.500h14M4 13.500h8" stroke="#000" />,
  right: <path d="M1 3.500h14M6 5.500h9M1 7.500h14M6 9.500h9M1 11.500h14M6 13.500h9" stroke="#000" />,
  dist: <><path d="M3 6.500h10M3 8.500h10M3 10.500h10M3 12.500h10M3 14.500h10M.5 1v14M15.500 1v14" stroke="#000" /><path d="M2 3.500h12M4 1.500l-2 2 2 2M12 1.500l2 2-2 2" fill="none" stroke="#2858b8" /></>,
  lines: <><path d="M7 4.500h8M7 8.500h8M7 12.500h8" stroke="#000" /><path d="M3 2v12M1 4l2-2 2 2M1 12l2 2 2-2" fill="none" stroke="#2858b8" /></>,
  nums: <><path d="M6 3.500h9M6 8.500h9M6 13.500h9" stroke="#000" /><path d="M2.500 1v4M1 7.500h3M1 9.500h3M1 12.500h3M1 14.500h3" stroke="#2858b8" /></>,
  bullets: <><path d="M6 3.500h9M6 8.500h9M6 13.500h9" stroke="#000" /><path d="M1 2h3v3H1zM1 7h3v3H1zM1 12h3v3H1z" fill="#2858b8" /></>,
  outdent: <><path d="M1 3.500h14M8 5.500h7M8 7.500h7M8 9.500h4M1 12.500h10" stroke="#000" /><path d="M6 7.500H1M3 5.500l-2 2 2 2" fill="none" stroke="#2858b8" /></>,
  indent: <><path d="M1 3.500h14M8 5.500h7M8 7.500h7M8 9.500h4M1 12.500h10" stroke="#000" /><path d="M1 7.500h5M4 5.500l2 2-2 2" fill="none" stroke="#2858b8" /></>,
  hilite: <><path d="M0 12h16v4H0z" fill="#ffff00" /><text x="0" y="10" fontSize="10" fill="#000">ab</text><path d="M8 10l6-8 2 2-6 7z" fill="#c8b8e8" stroke="#555" /></>,
  fcolor: <><path d="M0 12h16v4H0z" fill="#ff0000" /><text x="3" y="11" fontSize="12" fontWeight="bold" fontFamily="Liberation Serif, serif" fill="#3858a8">A</text></>,
  wen: <><text x="1" y="7" fontSize="7" fill="#000">wén</text><text x="3" y="15" fontSize="10" fill="#2858b8">文</text></>,
  circled: <><circle cx="8" cy="8" r="7.500" fill="none" stroke="#000" /><text x="3" y="12" fontSize="10" fill="#000">字</text></>,
};

const Draw = ({ name }: { name: string }) => (
  <svg width="16" height="16" viewBox="0 0 16 16" overflow="visible" fontFamily="Liberation Sans, Noto Sans CJK SC, sans-serif">
    {drawings[name]}
  </svg>
);

/* "|" is a separator, "v" a drop-down arrow, anything else names a drawing. */
const Tools = ({ items }: { items: string[] }) => (
  <>
    {items.map((n, i) =>
      n === "|" ? <Sep key={i} />
        : n === "v" ? <DropArrow key={i} aria-label="more"><Tri /></DropArrow>
        : <Tool key={i} aria-label={n} $on={n === "marks"}><Draw name={n} /></Tool>
    )}
  </>
);

const ComboBox = ({ w, value, label }: { w: number; value: string; label: string }) => (
  <Combo $w={w}>
    <ComboSelect aria-label={label} defaultValue={value}><option>{value}</option></ComboSelect>
    <ComboArrow><Tri /></ComboArrow>
  </Combo>
);

const LetterA = styled.span<{ $shade?: boolean }>`
  width: 15px;
  border: 1px solid ${p => (p.$shade ? "#b0b0b0" : "#000")};
  background: ${p => (p.$shade ? "#b0b0b0" : "transparent")};
  line-height: 14px;
`;

const colStops = [24, 69, 138, 361, 453, 564, 655, 701, 745, 790];
const HorizontalRuler = () => (
  <svg width="850" height="21" viewBox="0 0 850 21">
    <rect x="0" y="4" width="850" height="12" fill="#fff" />
    <rect x="0" y="4" width="22" height="12" fill="#808080" />
    {Array.from({ length: 24 }, (_, k) => {
      const x = 57.500 + k * 33.600;
      return (
        <g key={k}>
          <text x={x} y="14" fontSize="10" textAnchor="middle" fontFamily="Liberation Sans, sans-serif">{2 * (k + 1)}</text>
          <path d={`M${Math.round(x - 9)}.5 8v5M${Math.round(x + 8)}.5 8v5`} stroke="#000" />
        </g>
      );
    })}
    {colStops.map(x => (
      <path key={x} d={`M${x - 2}.5 5v10M${x}.5 4v12M${x + 2}.5 5v10M${x - 4} 8.500h9M${x - 4} 11.500h9`} stroke="#8a8a8a" />
    ))}
    <path d="M247.500 1.500h8v4l-8 6v4h8v-4l-8-6zM247.500 15.500h8v5h-8z" fill="#e8e6e0" stroke="#000" />
    <path d="M355.500 14.500v-3l4.500-4 4.500 4v3z" fill="#d4d0c8" stroke="#000" />
  </svg>
);

const rowBars = [23, 47, 72, 97, 122, 148, 172, 198, 225, 252, 280, 308, 350, 375, 402, 428, 456, 481, 508, 534, 560, 586];
const VerticalRuler = () => (
  <svg width="14" height="600" viewBox="0 0 14 600">
    <rect width="14" height="600" fill="#fff" />
    {Array.from({ length: 15 }, (_, k) => {
      const y = 10 + k * 38.400;
      return (
        <g key={k}>
          <text transform={`translate(10 ${y}) rotate(-90)`} fontSize="10" textAnchor="middle" fontFamily="Liberation Sans, sans-serif">{30 + 2 * k}</text>
          <path d={`M5 ${Math.round(y - 9)}.5h4M5 ${Math.round(y + 9)}.5h4`} stroke="#000" />
        </g>
      );
    })}
    {rowBars.map(y => <rect key={y} y={y - 3} width="14" height="6" fill="#808080" />)}
  </svg>
);

/* ---------- overlays ---------- */

const Highlight = styled.div<{ $x: number; $y: number; $h: number }>`
  position: absolute;
  left: ${p => p.$x}px;
  top: ${p => p.$y}px;
  right: 0;
  height: ${p => p.$h}px;
  border: 3px solid #18ee18;
  box-shadow: 1px 2px 4px rgba(0, 0, 0, 0.6), inset 1px 2px 4px rgba(0, 0, 0, 0.5);
  pointer-events: none;
`;

const Ball = styled.div`
  position: absolute;
  right: -31px;
  top: 746px;
  width: 42px;
  height: 42px;
  padding-left: 3px;
  border: 2px solid #eee;
  border-radius: 50%;
  background: radial-gradient(circle at 40% 30%, #8be08b, #2fa84a 70%);
  box-shadow: 0 2px 5px rgba(0, 0, 0, 0.5);
  color: #fff;
  font: bold 12px/38px ${SANS};
`;

export default function App() {
  return (
    <Desktop>
      <Global />
      <MainWindow>
        <TitleBar>
          <AppIcon />
          <Title>Graphic Editor 9.07b2 (00@HY-HYCAM-PC066 - Windows, pid:2220)</Title>
          <Buttons>
            <WindowButton kind="min" /><WindowButton kind="max" /><WindowButton kind="close" />
          </Buttons>
        </TitleBar>
        <TopStrip>
          <MenuBar>
            {menus.map(([name, u]) => (
              <MenuItem key={name}>
                {u < 0 ? name : <>{name.slice(0, u)}<u>{name[u]}</u>{name.slice(u + 1)}</>}
              </MenuItem>
            ))}
          </MenuBar>
          <Brand>
            <BrandLogo><FrontlineLogo /></BrandLogo>
            <BrandTitle>Genesis 2000<BrandSub>Graphic Editor</BrandSub></BrandTitle>
            <BrandDate>17 Mar 201<br />11:15 PM</BrandDate>
          </Brand>
        </TopStrip>
        <Body>
          <Sidebar>
            <InfoBox>Job : 8v2bp00ca0</InfoBox>
            <InfoBox>Step: cam</InfoBox>
            <MatrixFrame><MatrixButton>Job Matrix ...</MatrixButton></MatrixFrame>
            <ListFrame>
              <LayerList>
                {layerGroups.map(group => (
                  <LayerGroup key={group[0][0]}>
                    {group.map(([name, bg]) => <LayerRow key={name} name={name} bg={bg} />)}
                  </LayerGroup>
                ))}
              </LayerList>
              <ListEdge />
              <ScrollTrack>
                <ScrollArrow />
                <ScrollThumb />
                <ScrollArrow down />
              </ScrollTrack>
            </ListFrame>
            <InfoBox $small>Selected : 1305</InfoBox>
          </Sidebar>
          <Canvas><Board /></Canvas>
        </Body>
        <StatusRow>
          <ToolCell>
            <ToolButton aria-label="zoom area">
              <svg width="20" height="20" viewBox="0 0 20 20" fill="none" stroke="#000">
                <path d="M.5.5h19v19H.5zM4 4l12 12M4 8V4h4M16 12v4h-4" />
              </svg>
            </ToolButton>
          </ToolCell>
          <ToolCell>
            <ToolButton aria-label="measure">
              <svg width="20" height="20" viewBox="0 0 20 20" fill="none" stroke="#000">
                <path d="M.5.5h19v19H.5zM2 18L18 2M6 5v4h4M3 17h7M11 17v-4h3v4zM16 13v4" />
              </svg>
            </ToolButton>
          </ToolCell>
          <ToolCell $on>
            <ToolButton aria-label="grid">
              <svg width="17" height="18" viewBox="0 0 17 18" fill="none" stroke="#000">
                <path d="M.5.5h16v17H.5zM3.500 6.500l3-3h8v11h-11zM8.500 3.500v11M3.500 9.500h11" />
              </svg>
            </ToolButton>
          </ToolCell>
          <CoordField>
            <CoordLabel htmlFor="xy">X Y :</CoordLabel>
            <CoordInput id="xy" />
          </CoordField>
          <ToolCell $on>
            <ToolButton aria-label="alert">
              <svg width="17" height="18" viewBox="0 0 17 18" fill="none" stroke="#000">
                <path d="M.5.5h16v17H.5z" /><path d="M8.500 3v8M8.500 13v2" strokeWidth="2" />
              </svg>
            </ToolButton>
          </ToolCell>
          <Message>&lt;M1&gt; - Select first corner</Message>
        </StatusRow>
        <Footer><FooterInner /></Footer>
      </MainWindow>
      <Taskbar>
        <TaskButton $w={47} aria-label="start" />
        <TaskButton $gap={50} aria-label="task" />
        <TaskButton $gap={34} aria-label="task" />
        {Array.from({ length: 15 }, (_, i) => <TaskButton key={i} $on={i === 9} aria-label="task" />)}
      </Taskbar>

      <Note>L6层阻抗没有补偿!</Note>

      <Popup $left={1521} $top={80}>
        <TitleBar>
          <AppIcon />
          <Title>Features Filter Popup</Title>
          <WindowButton kind="close" />
        </TitleBar>
        <FilterBar>
          <FilterButton $on aria-label="line"><GlyphIcon on><path d="M6 23L23 7" stroke="currentColor" strokeWidth="4" strokeLinecap="round" /></GlyphIcon></FilterButton>
          <FilterButton aria-label="pad"><GlyphIcon><circle cx="15" cy="15" r="7.500" fill="currentColor" /></GlyphIcon></FilterButton>
          <FilterButton aria-label="surface"><GlyphIcon><path d="M12 4h11l3 3v16l-3 3H8l-4-4V12h8z" fill="currentColor" /></GlyphIcon></FilterButton>
          <FilterButton $on aria-label="arc"><GlyphIcon on><path d="M7 9a9 9 0 1 1 9 15" stroke="currentColor" strokeWidth="3" /></GlyphIcon></FilterButton>
          <FilterButton $on aria-label="text"><GlyphIcon on><path d="M9.500 23V9.500h12V23M9.500 16.500h12" stroke="currentColor" strokeWidth="3" /></GlyphIcon></FilterButton>
          <PolarityGroup>
            <FilterButton $on $cream aria-label="positive"><GlyphIcon on cream><path d="M15 6v18M6 15h18" stroke="currentColor" strokeWidth="6" /></GlyphIcon></FilterButton>
            <FilterButton $cream aria-label="negative"><GlyphIcon cream><path d="M6 15h18" stroke="currentColor" strokeWidth="6" /></GlyphIcon></FilterButton>
          </PolarityGroup>
        </FilterBar>
        <SideStubs>
          <Stub $h={26} /><Stub $h={28} /><Stub $h={20} /><Stub $h={44} /><Stub $h={26} />
        </SideStubs>
      </Popup>

      <Popup $left={1533} $top={152}>
        <TitleBar>
          <AppIcon />
          <Title>Symbols Histogram Popup</Title>
          <WindowButton kind="close" />
        </TitleBar>
        <FilterInput aria-label="symbol filter" defaultValue="*" />
        <HistogramBody>
          <HistogramList>
            <HistogramItem $on><span>r4.7</span><span>-</span><span>1305</span></HistogramItem>
            <HistogramItem><span>r6.301</span><span>-</span><span>59</span></HistogramItem>
            <HistogramItem><span>r20.2</span><span>-</span><span>1</span></HistogramItem>
          </HistogramList>
          <HistogramScroll />
        </HistogramBody>
      </Popup>
      <Highlight $x={1500} $y={193} $h={32} />

      <WordWindow>
        <WordTitle $active>
          <svg width="16" height="16" viewBox="0 0 16 16">
            <path d="M5 2h10v13H5z" fill="#dce8f8" stroke="#6888c0" />
            <path d="M11 6h3M11 8h3M11 10h3" stroke="#6888c0" />
            <rect x="0" y="1" width="11" height="11" fill="#2a50a8" stroke="#cfe0f8" />
            <path d="M2 4l2 6 1.500-4L7 10l2-6" fill="none" stroke="#fff" strokeWidth="1.500" />
          </svg>
          <Title>8v2bp00ca0-Impedance Design(New).rtf - Microsoft Word</Title>
          <Buttons><WindowButton kind="min" /><WindowButton kind="max" /></Buttons>
        </WordTitle>
        <Toolbar>
          <Handle />
          <Tools items={["new", "open", "save", "perm", "mail", "|", "print", "preview", "|"]} />
          <CjkTool>繁</CjkTool>
          <Tools items={["v", "spell", "research", "|", "cut", "copy", "paste", "brush", "|", "undo", "v", "redo", "v", "|", "link", "tdraw", "table", "excel", "|", "cols", "tdir", "shapes", "|", "docmap", "marks"]} />
          <ComboBox w={58} value="120%" label="zoom" />
          <Tools items={["help", "|"]} />
          <ReadButton><Draw name="read" /><span>阅读(<u>R</u>)</span></ReadButton>
          <EndCap aria-label="options"><Tri color="#fff" /></EndCap>
        </Toolbar>
        <Toolbar>
          <Handle />
          <Tools items={["styles"]} />
          <ComboBox w={82} value="正文 + 宋体" label="style" />
          <ComboBox w={123} value="宋体" label="font" />
          <ComboBox w={51} value="小五" label="size" />
          <Tools items={["|"]} />
          <Tool>B</Tool>
          <Tool><i>I</i></Tool>
          <Tool><u>U</u></Tool>
          <Tools items={["v"]} />
          <Tool><LetterA>A</LetterA></Tool>
          <Tool><LetterA $shade>A</LetterA></Tool>
          <Tools items={["scale", "v", "|", "just", "center", "right", "dist", "lines", "v", "|", "nums", "bullets", "outdent", "indent", "|", "hilite", "v", "fcolor", "v", "wen", "circled"]} />
          <EndCap aria-label="options"><Tri color="#fff" /></EndCap>
        </Toolbar>
        <WordMenu>
          <Handle />
          {wordMenus.map(([t, k]) => <WordMenuItem key={k}>{t}(<u>{k}</u>)</WordMenuItem>)}
          <AskBox aria-label="help question" placeholder="键入需要帮助的问题" />
          <DropArrow aria-label="more"><Tri /></DropArrow>
        </WordMenu>
        <WorkArea>
          <TabStop>L</TabStop>
          <RulerX><HorizontalRuler /></RulerX>
          <RulerY><VerticalRuler /></RulerY>
          <Page>
            <StackTable>
              <colgroup><col width="7" /><col width="151" /><col width="450" /><col /></colgroup>
              <tbody>
                {stack.map(([a, b, c], i) => (
                  <tr key={i}>
                    <td><RowMark /></td><th><Doc t={a} /></th><td><Doc t={b} /></td><td><Doc t={c} /></td>
                  </tr>
                ))}
              </tbody>
            </StackTable>
            <SummaryTable>
              <colgroup><col width="155" /><col width="453" /><col /></colgroup>
              <tbody>
                {summary.map(([a, b]) => (
                  <tr key={a}><th><Doc t={a} /></th><td><Doc t={b} /></td><td><Doc t="" /></td></tr>
                ))}
              </tbody>
            </SummaryTable>
            <Heading><Doc t="Impedance·Information:" /></Heading>
            <ImpTable>
              <colgroup>{impCols.map((w, i) => <col key={i} width={w} />)}<col /></colgroup>
              <tbody>
                <tr>
                  <td><RowMark /></td>
                  {impHead.map(h => <Th key={h} $pink={h === "FP_des" || h === "Imp_des"}><Doc t={h} /></Th>)}
                </tr>
                {impRows.map((row, i) => (
                  <tr key={i}>
                    <td><RowMark /></td>
                    {row.map((t, j) => <td key={j}><Doc t={t} caret={i === 4 && j === 3} /></td>)}
                  </tr>
                ))}
              </tbody>
            </ImpTable>
            <Remark><Doc t="Remark·：1.·In·order·to·fit·the·stack-up·and·impedance·value,·we·adjust·the·width·of·the·" /></Remark>
          </Page>
        </WorkArea>
      </WordWindow>
      <Highlight $x={1105} $y={943} $h={29} />
      <Ball>3</Ball>
    </Desktop>
  );
}
